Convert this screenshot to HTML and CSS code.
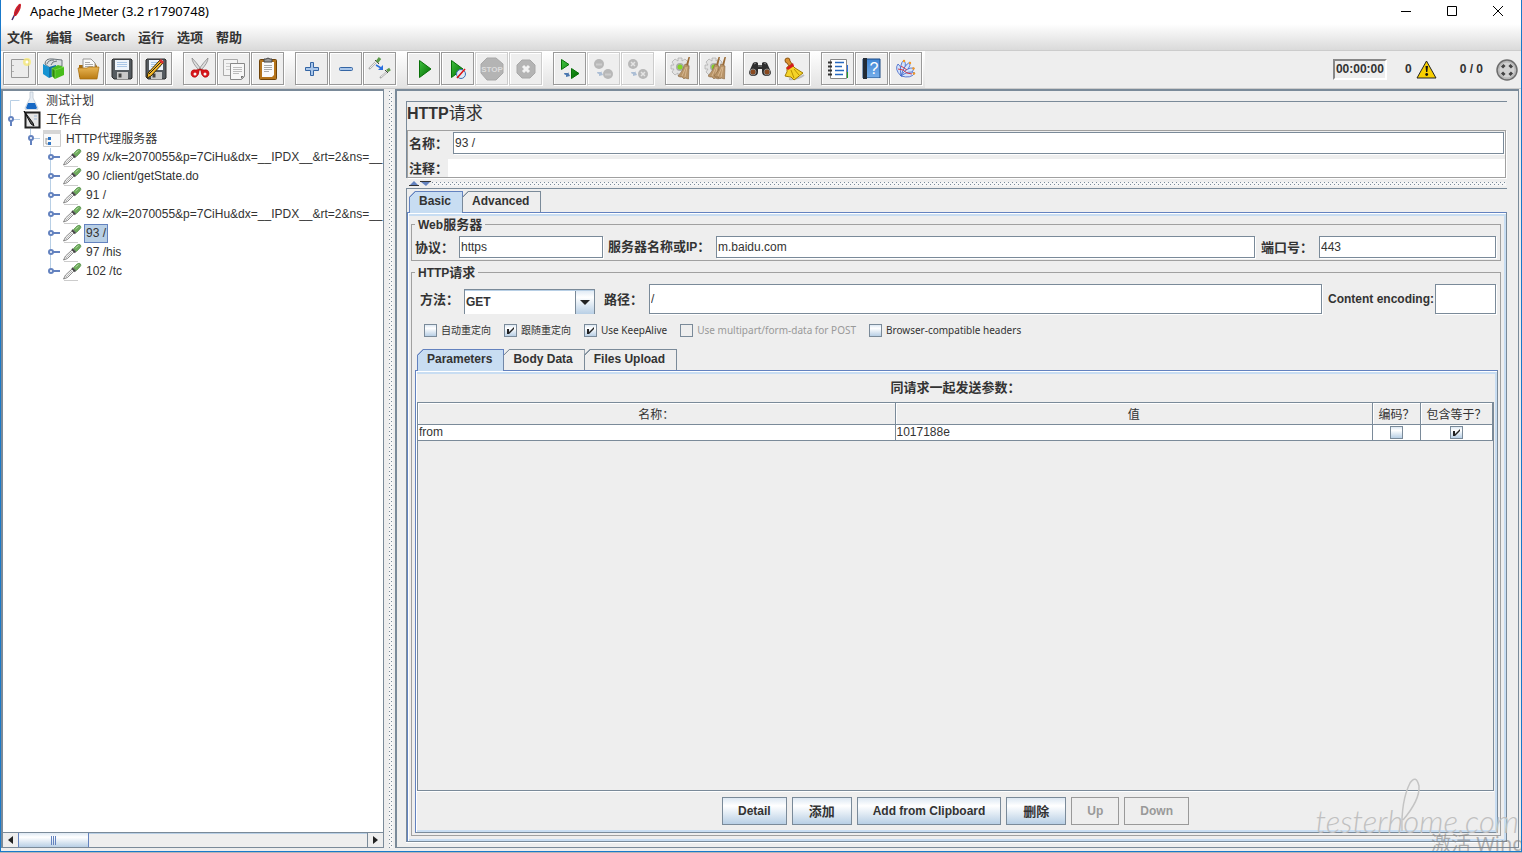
FILE: index.html
```
<!DOCTYPE html>
<html lang="zh-CN">
<head>
  <meta charset="UTF-8">
  <meta name="viewport" content="width=device-width, initial-scale=1.0">
  <title>Apache JMeter (3.2 r1790748)</title>
  <link rel="stylesheet" href="styles.css">
</head>
<body>
  <!-- shared gradients and symbols -->
  <svg class="defs" aria-hidden="true">
    <defs>
      <linearGradient id="green" x1="0" y1="0" x2="1" y2="1"><stop offset="0" stop-color="#3fc13f"/><stop offset="1" stop-color="#006a00"/></linearGradient>
      <linearGradient id="gold" x1="0" y1="0" x2="0" y2="1"><stop offset="0" stop-color="#e9b655"/><stop offset="1" stop-color="#b97a12"/></linearGradient>
      <linearGradient id="blue" x1="0" y1="0" x2="0" y2="1"><stop offset="0" stop-color="#3f86d6"/><stop offset="1" stop-color="#76aeea"/></linearGradient>
      <symbol id="leaf-handle" viewBox="0 0 19 19">
        <path d="M7.500 0v19" stroke="#b8cfe5"/>
        <path d="M10 9h7" stroke="#6382bf" stroke-width="2"/>
        <circle cx="8" cy="9" r="2" fill="#fff" stroke="#6382bf" stroke-width="2"/>
      </symbol>
      <symbol id="open-handle" viewBox="0 0 19 19">
        <path d="M7.500 0v9M9 9.500h8" stroke="#b8cfe5"/>
        <path d="M8 10v6" stroke="#6382bf" stroke-width="2"/>
        <circle cx="8" cy="9" r="2" fill="#fff" stroke="#6382bf" stroke-width="2"/>
      </symbol>
      <symbol id="dropper" viewBox="0 0 20 19">
        <path d="M2 18.500h14" stroke="#ccc"/>
        <path d="M1.500 17l2-4L10 7l2 2-6.500 6.500z" fill="#f2f2f2" stroke="#6c6c6c" stroke-width=".8"/>
        <path d="M4 15l6-6" stroke="#a8a8a8" stroke-width=".8"/>
        <path d="M10 6l3.500 3.500" stroke="#444" stroke-width="1.800"/>
        <path d="M11.500 5.500L15 2q2.500-1.500 3.500 0t-.8 3.200L14.500 8.500z" fill="#6fac5c" stroke="#4a8a40" stroke-width=".7"/>
        <path d="M13.500 5l3-2.500" stroke="#b4dca4"/>
      </symbol>
      <symbol id="floppy" viewBox="0 0 25 25">
        <path d="M4 3h18l1 1v18l-1 1H5l-2-2V4z" fill="#555b60" stroke="#2c2c2c"/>
        <path d="M6 4h14v10H6z" fill="#eef4fb"/>
        <path d="M8 6.500h10M8 8.500h10M8 10.500h10" stroke="#a9c6e6"/>
        <path d="M8 16h11v7H8z" fill="#c9c9c9"/>
        <path d="M9.500 17.500h3v4h-3z" fill="#444"/>
      </symbol>
      <symbol id="gear-base" viewBox="0 0 25 25">
        <path d="M9 2h4v3l3-2 3 3-2 3h3v4h-3l2 3-3 3-3-2v3H9v-3l-3 2-3-3 2-3H2V9h3L3 6l3-3 3 2z" fill="#e3e3e3" stroke="#b0b0b0" stroke-width=".8"/>
        <circle cx="11" cy="11" r="4" fill="#aaa"/><circle cx="11" cy="11" r="2.500" fill="#83d526"/>
      </symbol>
      <symbol id="broom" viewBox="0 0 13 23">
        <path d="M10.500 0h1.500l-2 9-2-1z" fill="#9b6b35"/>
        <path d="M7 7l4 2-.5 13-3.500-1-1 1-2-2H2l-2-1q5-5 7-12z" fill="#b89468" stroke="#8a6740" stroke-width=".6"/>
        <path d="M8 10l-4 9M9 10L7 20" stroke="#e0c09a" stroke-width=".8"/>
      </symbol>
      <symbol id="pair-arrow" viewBox="0 0 6 6"><path d="M0 1h4V0l2 4-4 1V3Q0 3 0 1z" fill="#4b78b0"/></symbol>
    </defs>
  </svg>

  <div class="window">
    <header class="titlebar">
      <svg class="app-icon" viewBox="0 0 16 20" width="16" height="20"><path d="M4 18l3-6" stroke="#4a2a6a" stroke-width="1.500"/><path d="M6 14Q5 8 11 2q2-1 2 1 0 5-5 11z" fill="#d22128"/><path d="M7 13l5-10" stroke="#8a1a4a" stroke-width=".8"/></svg>
      <span class="app-title">Apache JMeter (3.2 r1790748)</span>
      <div class="window-buttons">
        <button aria-label="Minimize"><svg width="12" height="12" viewBox="0 0 12 12"><path d="M1 6.500h10" stroke="#000"/></svg></button>
        <button aria-label="Maximize"><svg width="12" height="12" viewBox="0 0 12 12"><path d="M1.500 1.500h9v9h-9z" fill="none" stroke="#000"/></svg></button>
        <button aria-label="Close"><svg width="12" height="12" viewBox="0 0 12 12"><path d="M1 1l10 10M11 1L1 11" stroke="#000"/></svg></button>
      </div>
    </header>

    <nav class="menubar">
      <a href="#">文件</a>
      <a href="#">编辑</a>
      <a href="#" class="latin">Search</a>
      <a href="#">运行</a>
      <a href="#">选项</a>
      <a href="#">帮助</a>
    </nav>

    <div class="toolbar-row">
      <div class="toolbar">
        <div class="tool-group">
          <button aria-label="New"><svg viewBox="0 0 25 25"><path d="M4.500 3.500h17v18h-17z" fill="#ececec" stroke="#999"/><path d="M6 9v1M6 15v1" stroke="#777"/><circle cx="20" cy="6" r="4" fill="#f7ea7a" opacity=".8"/><circle cx="20" cy="6" r="1.500" fill="#fff"/></svg></button>
          <button aria-label="Templates"><svg viewBox="0 0 25 25"><path d="M4 8q0-6 8-5l9 1v6L9 12z" fill="#d9dde0" stroke="#6b747a"/><path d="M6 8q1-4 7-4M10 9q1-4 6-4" stroke="#6b747a" fill="none"/><path d="M2 8l6 3v11l-6-4z" fill="#1593d2"/><path d="M8 11l7-2v10l-7 3z" fill="#0f6fa8"/><path d="M11 12l6-3 6 2v8l-9 4-3-3z" fill="#48bd1c"/><path d="M11 12l3 2v9l-3-3zM14 14l9-3" fill="#2c8a0c" stroke="#8be35b" stroke-width=".6"/></svg></button>
          <button aria-label="Open"><svg viewBox="0 0 25 25"><path d="M4 9h4l1-2h11l2 3v11H4z" fill="#a86d10"/><path d="M8 3h8l4 4v9H8z" fill="#fafafa" stroke="#999"/><path d="M10 6.500h5M10 8.500h8M10 10.500h8" stroke="#aaa"/><path d="M3 12h9l2-1h10l-2 12H5z" fill="url(#gold)" stroke="#a36a0b" stroke-width=".7"/></svg></button>
          <button aria-label="Save"><svg viewBox="0 0 25 25"><use href="#floppy"/></svg></button>
          <button aria-label="Save as"><svg viewBox="0 0 25 25"><use href="#floppy"/><path d="M4 22l1-5L17 4l3 3L8 20z" fill="#f5b829" stroke="#3c2a00"/><path d="M6 18L18 6" stroke="#222"/><path d="M16 5l2-2 3 3-2 2z" fill="#d33"/></svg></button>
        </div>
        <div class="tool-group">
          <button aria-label="Cut"><svg viewBox="0 0 25 25"><path d="M5 2q0 5 7 12l2-1Q9 6 5 2zM21 2q0 5-7 12l-2-1q5-7 9-11z" fill="#ddd" stroke="#888" stroke-width=".8"/><path d="M9 14q-5-1-5 4 1 4 5 3 3-2 3-6l1-2 1 2q0 4 3 6 4 1 5-3 0-5-5-4l-4-1z" fill="#d8151b" stroke="#a00" stroke-width=".6"/><circle cx="8" cy="18" r="1.500" fill="#f6f6f6"/><circle cx="18" cy="18" r="1.500" fill="#f6f6f6"/></svg></button>
          <button aria-label="Copy"><svg viewBox="0 0 25 25"><path d="M2.500 3.500h14v16h-14z" fill="#f3f3f3" stroke="#aaa"/><path d="M5 7.500h9M5 10.500h4M5 13.500h4" stroke="#ccc"/><path d="M9.500 7.500h14v13l-3 3h-11z" fill="#f7f7f7" stroke="#888"/><path d="M12 11.500h9M12 13.500h9M12 15.500h9M12 17.500h6" stroke="#bbb"/><path d="M20 23v-3h3z" fill="#777"/></svg></button>
          <button aria-label="Paste"><svg viewBox="0 0 25 25"><rect x="4.500" y="3.500" width="17" height="20" rx="1" fill="#b5731a" stroke="#6f4308"/><path d="M7 6h12v13l-2 2H7z" fill="#fafafa"/><path d="M9 9.500h8M9 11.500h8M9 13.500h8M9 15.500h5" stroke="#aaa"/><path d="M9 3h2q2-2 4 0h2v3H9z" fill="#999" stroke="#444"/></svg></button>
        </div>
        <div class="tool-group">
          <button aria-label="Expand all"><svg viewBox="0 0 25 25"><path d="M11.500 6.500h3v5h5v3h-5v5h-3v-5h-5v-3h5z" fill="#a9c6ea" stroke="#3465a4"/></svg></button>
          <button aria-label="Collapse all"><svg viewBox="0 0 25 25"><rect x="6.500" y="11.500" width="13" height="3" rx="1" fill="#a9c6ea" stroke="#3465a4"/></svg></button>
          <button aria-label="Toggle"><svg viewBox="0 0 25 25"><path d="M2 13l7-7M13 22l7-6" stroke="#aaa" stroke-width="2"/><path d="M3 12l6-6M14 21l6-5" stroke="#eee"/><path d="M8 4l4 4M18 14l3 3" stroke="#444"/><path d="M10 6l3-4M20 15l3-2" stroke="#5d9a4a" stroke-width="3"/><path d="M9 9l5 3" stroke="#2a6fe0" stroke-width="1.500"/><path d="M16 9v5h-5z" fill="#2a6fe0"/></svg></button>
        </div>
        <div class="tool-group">
          <button aria-label="Start"><svg viewBox="0 0 25 25"><path d="M8.500 4.500L20 13 8.500 21.500z" fill="url(#green)" stroke="#087008"/></svg></button>
          <button aria-label="Start no pauses"><svg viewBox="0 0 25 25"><path d="M6.500 4.500L18 13 6.500 21.500z" fill="url(#green)" stroke="#087008"/><circle cx="16" cy="18" r="4.500" fill="#dfeaf5" stroke="#3a6fb5"/><path d="M12 22l8-9" stroke="#d11" stroke-width="1.500"/></svg></button>
          <button aria-label="Stop" disabled><svg viewBox="0 0 25 25"><path d="M8 2h9l7 6v9l-7 7H8l-6-7V8z" fill="#b4b4b4" stroke="#a8a8a8"/><text x="13" y="16" class="stop-text">STOP</text></svg></button>
          <button aria-label="Shutdown" disabled><svg viewBox="0 0 25 25"><path d="M9 4h8l5 5v8l-5 5H9l-5-5V9z" fill="#b4b4b4" stroke="#a8a8a8"/><path d="M10 10l6 6M16 10l-6 6" stroke="#f2f2f2" stroke-width="3"/></svg></button>
        </div>
        <div class="tool-group">
          <button aria-label="Remote start all"><svg viewBox="0 0 25 25"><path d="M4.500 3.500L12 8.500l-7.500 5zM14.500 12.500l7.500 5-7.500 5z" fill="url(#green)" stroke="#087008"/><use href="#pair-arrow" x="7" y="16" width="6" height="6"/></svg></button>
          <button aria-label="Remote stop all" disabled><svg viewBox="0 0 25 25"><g fill="#b8b8b8"><circle cx="8" cy="8" r="5"/><circle cx="17" cy="18" r="5"/></g><path d="M5 8.500h6M14 18.500h6" stroke="#ccc" stroke-width="2"/><use href="#pair-arrow" x="6" y="15" width="6" height="6" opacity=".4"/></svg></button>
          <button aria-label="Remote shutdown all" disabled><svg viewBox="0 0 25 25"><g fill="#b8b8b8"><circle cx="8" cy="8" r="5"/><circle cx="18" cy="18" r="5"/></g><path d="M6 6l4 4M10 6l-4 4M16 16l4 4M20 16l-4 4" stroke="#e4e4e4" stroke-width="1.500"/><use href="#pair-arrow" x="6" y="15" width="6" height="6" opacity=".4"/></svg></button>
        </div>
        <div class="tool-group">
          <button aria-label="Clear"><svg viewBox="0 0 25 25"><use href="#gear-base"/><use href="#broom" x="9" y="1" width="13" height="23"/></svg></button>
          <button aria-label="Clear all"><svg viewBox="0 0 25 25"><use href="#gear-base"/><use href="#broom" x="5" y="1" width="13" height="23"/><use href="#broom" x="11" y="1" width="13" height="23"/></svg></button>
        </div>
        <div class="tool-group">
          <button aria-label="Search"><svg viewBox="0 0 25 25"><path d="M6 7q3-2 5 0v2h4V7q2-2 5 0l4 9q0 4-4 4-5 0-5-4v-3h-4v3q0 4-5 4-4 0-4-4z" fill="#2e2e2e"/><circle cx="6" cy="16" r="3" fill="#8a4a20" stroke="#888"/><circle cx="20" cy="16" r="3" fill="#8a4a20" stroke="#888"/><path d="M7 8l2-1M17 7l2 1M11 10h4" stroke="#888"/></svg></button>
          <button aria-label="Reset search"><svg viewBox="0 0 25 25"><path d="M8 23q8 1 15-4" stroke="#bbb" stroke-width="2" fill="none"/><path d="M4 4q0-2 3-2 2 0 2 3l2 3-3 2-2-3Q4 7 4 4z" fill="#d9902f" stroke="#8c5410"/><path d="M11 9l3 3 8 5-9 7-3-3H9l-5-1q3-4 2-9z" fill="#f5d327" stroke="#a07b00"/><path d="M5 12l7-5 1 3-6 4z" fill="#d61a1a"/><path d="M10 14l3 8M13 13l5 6" stroke="#b99100"/></svg></button>
        </div>
        <div class="tool-group">
          <button aria-label="Function helper"><svg viewBox="0 0 25 25"><path d="M20 12h3v10h-3z" fill="#19a02a"/><path d="M21 9h2v7h-2z" fill="#2a6fe0"/><path d="M5.500 3.500h16v19h-16z" fill="#fff" stroke="#888"/><path d="M3 6.500h4M3 10.500h4M3 14.500h4M3 18.500h4" stroke="#333" stroke-width="2"/><path d="M10 6.500h9M10 10.500h7M10 14.500h9M10 18.500h8" stroke="#2769c0" stroke-width="1.500"/></svg></button>
          <button aria-label="Help"><svg viewBox="0 0 25 25"><path d="M4 3h17v19H4z" fill="url(#blue)" stroke="#1c4a84"/><path d="M4 2h4v21H4z" fill="#222b36"/><path d="M8 22.500h13" stroke="#dfe8f2"/><text x="15" y="18" class="help-text">?</text></svg></button>
          <button aria-label="About"><svg viewBox="0 0 25 25"><g fill="#d5e3fa" stroke="#3860c8" stroke-width=".8"><path d="M8 20Q1 13 5 8q5 4 3 12z"/><path d="M8 20Q6 8 11 4q4 6-3 16z"/><path d="M8 20Q11 9 17 6q1 7-9 14z"/><path d="M8 20q5-9 13-8-1 7-13 8z"/><path d="M8 20q8-6 14-3-4 6-14 3z"/></g><path d="M5 13l5 1 4 3 5 1M8 10l6 4" stroke="#d03a4a" fill="none"/><g fill="#f69923"><circle cx="11" cy="5" r="1.200"/><circle cx="17" cy="7" r="1.200"/><circle cx="20.500" cy="12.500" r="1.200"/><circle cx="21" cy="17.500" r="1.200"/></g></svg></button>
        </div>
      </div>

      <div class="status">
        <span class="timer">00:00:00</span>
        <span class="errors">0</span>
        <svg class="warning" viewBox="0 0 21 19" width="21" height="19"><path d="M10.500 1L20 18H1z" fill="#f8cf00" stroke="#222" stroke-linejoin="round"/><path d="M9.500 6h2.500l-.7 6h-1.200z" fill="#111"/><circle cx="10.700" cy="14.500" r="1.400" fill="#111"/></svg>
        <span class="threads">0 / 0</span>
        <svg class="run-state" viewBox="0 0 22 22" width="22" height="22"><circle cx="11" cy="11" r="10" fill="#b9b9b9" stroke="#6d6d6d" stroke-width="1.500"/><circle cx="11" cy="11" r="7.500" fill="#d2d2d2"/><path d="M6 8.500L8.500 6M13.500 6L16 8.500M16 13.500L13.500 16M8.500 16L6 13.500" fill="none" stroke="#444" stroke-width="3"/></svg>
      </div>
    </div>

    <main class="main">
      <aside class="tree-panel">
        <ul class="tree">
          <li><svg class="handle" viewBox="0 0 19 19"><path d="M7.500 19V9.500h9" fill="none" stroke="#b8cfe5"/></svg><svg class="node-icon" viewBox="0 0 20 19"><path d="M8 1h3v6l5 10q0 2-2 2H5q-2 0-2-2l5-10z" fill="#e6edf4" stroke="#b5c0cc" stroke-width=".7"/><path d="M6 12h7l2 5-1 1H5l-1-1z" fill="#1668c4"/></svg><span>测试计划</span></li>
          <li><svg class="handle"><use href="#open-handle"/></svg><svg class="node-icon" viewBox="0 0 20 19"><path d="M3.500 2.500h14v15h-14z" fill="#e6e6e6" stroke="#222" stroke-width="2"/><path d="M2 1l9 12 1 3-3-2z" fill="#555" stroke="#111"/><path d="M12 6h3M12 9h3" stroke="#9bb7d8"/></svg><span>工作台</span></li>
          <li class="depth-1"><svg class="handle"><use href="#open-handle"/></svg><svg class="node-icon" viewBox="0 0 20 19"><path d="M1.500 2.500h17v15h-17z" fill="#fafafa" stroke="#ccc"/><path d="M1 1h18v4H1z" fill="#d5d5d5"/><path d="M4 9v6h3M4 10h3" stroke="#999" fill="none"/><path d="M6 8h3v3H6zM6 13h3v3H6z" fill="#2d74c4"/></svg><span>HTTP代理服务器</span></li>
          <li class="depth-2"><svg class="handle"><use href="#leaf-handle"/></svg><svg class="node-icon"><use href="#dropper"/></svg><span>89 /x/k=2070055&amp;p=7CiHu&amp;dx=__IPDX__&amp;rt=2&amp;ns=__</span></li>
          <li class="depth-2"><svg class="handle"><use href="#leaf-handle"/></svg><svg class="node-icon"><use href="#dropper"/></svg><span>90 /client/getState.do</span></li>
          <li class="depth-2"><svg class="handle"><use href="#leaf-handle"/></svg><svg class="node-icon"><use href="#dropper"/></svg><span>91 /</span></li>
          <li class="depth-2"><svg class="handle"><use href="#leaf-handle"/></svg><svg class="node-icon"><use href="#dropper"/></svg><span>92 /x/k=2070055&amp;p=7CiHu&amp;dx=__IPDX__&amp;rt=2&amp;ns=__</span></li>
          <li class="depth-2"><svg class="handle"><use href="#leaf-handle"/></svg><svg class="node-icon"><use href="#dropper"/></svg><span class="selected">93 /</span></li>
          <li class="depth-2"><svg class="handle"><use href="#leaf-handle"/></svg><svg class="node-icon"><use href="#dropper"/></svg><span>97 /his</span></li>
          <li class="depth-2"><svg class="handle" viewBox="0 0 19 19"><path d="M7.500 0v9" stroke="#b8cfe5"/><path d="M10 9h7" stroke="#6382bf" stroke-width="2"/><circle cx="8" cy="9" r="2" fill="#fff" stroke="#6382bf" stroke-width="2"/></svg><svg class="node-icon"><use href="#dropper"/></svg><span>102 /tc</span></li>
        </ul>
        <div class="scrollbar">
          <button aria-label="Scroll left"><svg width="5" height="8" viewBox="0 0 5 8"><path d="M5 0v8L0 4z" fill="#222"/></svg></button>
          <div class="track"><div class="thumb"></div></div>
          <button aria-label="Scroll right"><svg width="5" height="8" viewBox="0 0 5 8"><path d="M0 0v8l5-4z" fill="#222"/></svg></button>
        </div>
      </aside>

      <div class="splitter"></div>

      <section class="editor">
        <div class="editor-head">
          <h1>HTTP<span>请求</span></h1>
          <div class="name-panel">
            <div class="name-row">
              <label for="name">名称：</label>
              <input id="name" type="text" value="93 /">
            </div>
            <div class="comment-row">
              <label for="comment">注释：</label>
              <input id="comment" type="text">
            </div>
          </div>
        </div>

        <div class="h-splitter">
          <svg width="24" height="5" viewBox="0 0 24 5"><path d="M1 5l5-5 5 5z" fill="#6382bf"/><path d="M1 4.500h10M12 .5h11" stroke="#333"/><path d="M13 1h9l-4 4z" fill="#6382bf"/></svg>
          <div class="grip"></div>
        </div>

        <div class="editor-body">
          <div class="tabs">
            <button class="tab active">Basic</button>
            <button class="tab">Advanced</button>
          </div>
          <div class="tab-pane outer-pane">
            <fieldset class="web-server">
              <legend>Web<span class="cjk">服务器</span></legend>
              <div class="server-row">
                <label class="short" for="protocol">协议：</label>
                <input id="protocol" type="text" value="https">
                <label class="host-label" for="host">服务器名称或<span class="latin">IP</span>：</label>
                <input id="host" type="text" value="m.baidu.com">
                <label class="port-label" for="port">端口号：</label>
                <input id="port" type="text" value="443">
              </div>
            </fieldset>

            <fieldset class="http-request">
              <legend>HTTP<span class="cjk">请求</span></legend>
              <div class="path-row">
                <label class="short" for="method">方法：</label>
                <div class="select-box">
                  <select id="method">
                    <option>GET</option>
                    <option>POST</option>
                  </select>
                  <svg width="10" height="5" viewBox="0 0 10 5"><path d="M0 0h10L5 5z" fill="#222"/></svg>
                </div>
                <label class="path-label" for="path">路径：</label>
                <input id="path" type="text" value="/">
                <label class="encoding-label latin" for="encoding">Content encoding:</label>
                <input id="encoding" type="text">
              </div>
              <div class="checks">
                <label><input type="checkbox">自动重定向</label>
                <label><input type="checkbox" checked>跟随重定向</label>
                <label><input type="checkbox" checked>Use KeepAlive</label>
                <label class="off"><input type="checkbox" disabled>Use multipart/form-data for POST</label>
                <label><input type="checkbox">Browser-compatible headers</label>
              </div>

              <div class="tabs">
                <button class="tab active">Parameters</button>
                <button class="tab">Body Data</button>
                <button class="tab">Files Upload</button>
              </div>
              <div class="tab-pane params-pane">
                <h2>同请求一起发送参数：</h2>
                <div class="table-box">
                  <table>
                    <colgroup><col><col><col class="col-encode"><col class="col-equals"></colgroup>
                    <thead>
                      <tr><th>名称：</th><th>值</th><th>编码？</th><th>包含等于？</th></tr>
                    </thead>
                    <tbody>
                      <tr>
                        <td>from</td>
                        <td>1017188e</td>
                        <td class="center"><input type="checkbox" aria-label="编码"></td>
                        <td class="center"><input type="checkbox" aria-label="包含等于" checked></td>
                      </tr>
                    </tbody>
                  </table>
                </div>
                <div class="actions">
                  <button class="latin">Detail</button>
                  <button>添加</button>
                  <button class="latin">Add from Clipboard</button>
                  <button>删除</button>
                  <button class="latin" disabled>Up</button>
                  <button class="latin" disabled>Down</button>
                </div>
              </div>
            </fieldset>
          </div>
        </div>
      </section>
    </main>

    <div class="watermark">
      <svg viewBox="0 0 30 56" width="30" height="56"><path d="M4 54Q3 24 12 6q6-9 9 3 1 14-16 34" fill="none" stroke="#c4c4c4" stroke-width="1.500"/></svg>
      <span>testerhome.com</span>
    </div>
    <div class="activation">激活 Windows</div>
  </div>
</body>
</html>
```
FILE: styles.css
```
* {
  margin: 0;
  padding: 0;
  box-sizing: border-box;
}

:root {
  --line: #7a8a99;
  --blue: #6382bf;
  --light: #c8ddf2;
  --gray: #a0a0a0;
  --bg: #eeeeee;
  --metal: linear-gradient(#dde8f3, #ffffff 30%, #b8cfe5);
}

body {
  height: 100vh;
  padding-bottom: 1px;
  background: #b5b5b5;
  color: #333;
  font-family: "Liberation Sans", "Noto Sans CJK SC", sans-serif;
  font-size: 12px;
  line-height: 15px;
  overflow: hidden;
}

button,
input,
select {
  font: inherit;
  color: inherit;
}

.defs {
  position: absolute;
  width: 0;
  height: 0;
}

.window {
  position: relative;
  display: flex;
  flex-direction: column;
  height: 100%;
  overflow: hidden;
  background: var(--bg);
  border: 1px solid #1979ca;
  border-top: 0;
}

/* Title bar */
.titlebar {
  display: flex;
  align-items: center;
  height: 24px;
  padding-left: 7px;
  background: #fff;
}
.app-title {
  margin: 0 auto 2px 6px;
  font-family: "Noto Sans", sans-serif;
  font-size: 13px;
  color: #000;
}
.window-buttons {
  display: flex;
  margin-bottom: 3px;
}
.window-buttons button {
  display: flex;
  align-items: center;
  justify-content: center;
  width: 46px;
  height: 20px;
  border: 0;
  background: none;
}

/* Menu */
.menubar {
  display: flex;
  align-items: center;
  gap: 13px;
  height: 27px;
  padding-left: 6px;
  background: linear-gradient(#fff, #dadada);
  border-bottom: 1px solid #ccc;
  font-size: 13px;
  font-weight: bold;
}
.menubar a {
  color: #333;
  text-decoration: none;
}
.latin,
.menubar .latin {
  font-size: 12px;
}

/* Toolbar */
.toolbar-row {
  display: flex;
  justify-content: space-between;
  height: 38px;
  border-bottom: 1px solid #ccc;
}
.toolbar {
  display: flex;
  gap: 11px;
  padding: 1px 3px 3px 2px;
  background: linear-gradient(#fff, #e2e2e2);
}
.tool-group {
  display: flex;
  gap: 1px;
}
.tool-group button {
  display: flex;
  align-items: center;
  justify-content: center;
  width: 33px;
  height: 33px;
  border: 1px solid #999;
  background: var(--bg);
  box-shadow: inset 1px 1px #fff, 1px 1px #fff;
}
.tool-group button:disabled {
  border-color: #ccc;
}
.tool-group svg {
  width: 25px;
  height: 25px;
}
.stop-text {
  font-size: 8px;
  font-weight: bold;
  text-anchor: middle;
  fill: #ddd;
}
.help-text {
  font-size: 16px;
  text-anchor: middle;
  fill: #fff;
}

.status {
  display: flex;
  align-items: center;
  padding-right: 3px;
  font-weight: bold;
}
.timer {
  padding: 1px;
  border: 2px solid #888;
  border-right-color: #fff;
  border-bottom-color: #fff;
  margin-right: 18px;
}
.warning {
  margin: 0 23px 0 4px;
}
.run-state {
  margin-left: 13px;
}

/* Main split */
.main {
  display: flex;
  flex: 1;
  min-height: 0;
  padding-bottom: 3px;
}
.tree-panel {
  display: flex;
  flex-direction: column;
  width: 383px;
  border: 1px solid var(--line);
  border-width: 2px 1px 1px 2px;
  background: #fff;
}
.tree {
  flex: 1;
  overflow: hidden;
  list-style: none;
}
.tree li {
  display: flex;
  align-items: center;
  height: 19px;
  white-space: nowrap;
}
.tree .depth-1 {
  padding-left: 20px;
}
.tree .depth-2 {
  padding-left: 40px;
}
.handle {
  flex: none;
  width: 19px;
  height: 19px;
}
.node-icon {
  flex: none;
  width: 20px;
  height: 19px;
}
.tree span {
  margin-left: 2px;
  padding: 2px 1px 0;
  border: 1px solid transparent;
}
.tree .depth-2 span {
  padding: 1px;
}
.tree .selected {
  background: #b8cfe5;
  border-color: var(--blue);
}

.scrollbar {
  display: flex;
  height: 15px;
  border-top: 1px solid var(--line);
  background: var(--bg);
}
.scrollbar button {
  display: flex;
  align-items: center;
  justify-content: center;
  width: 15px;
  border: 0;
  background: var(--bg);
}
.track {
  flex: 1;
  border-right: 1px solid var(--line);
  box-shadow: inset 0 1px #b8cfe5;
}
.thumb {
  width: 71px;
  height: 100%;
  border: 1px solid var(--blue);
  border-width: 0 1px;
  background:
    repeating-linear-gradient(90deg, var(--blue) 0 1px, transparent 1px 2px) center / 5px 9px no-repeat,
    var(--metal);
}

/* Dotted split bars */
.splitter,
.grip {
  background-color: #f6f6f6;
  background-image:
    conic-gradient(at 1px 1px, transparent 75%, var(--line) 0),
    conic-gradient(at 1px 1px, transparent 75%, var(--line) 0);
  background-position: 0 0, 2px 2px;
  background-size: 4px 4px;
}
.splitter {
  width: 11px;
  border: solid var(--bg);
  border-width: 2px 2px 0 5px;
}

/* Editor */
.editor {
  display: flex;
  flex: 1;
  flex-direction: column;
  min-width: 0;
  margin-right: 2px;
  padding: 10px 11px 5px 9px;
  border: 1px solid var(--line);
  border-width: 2px 1px 1px 2px;
}
.editor-head {
  border: solid var(--line);
  border-width: 1px 0 0 1px;
}
h1 {
  height: 28px;
  font-size: 16px;
  line-height: 24px;
}
h1 span {
  font-size: 17px;
  font-weight: normal;
}
label {
  flex: none;
  font-size: 13px;
  font-weight: bold;
}
label.latin {
  font-size: 12px;
}
input[type="text"] {
  min-width: 0;
  height: 22px;
  padding: 0 1px;
  border: 1px solid var(--line);
  background: #fff;
  box-shadow: 1px 1px #fff;
}
.name-panel {
  margin-right: 1px;
  padding-top: 1px;
  border: 1px solid var(--gray);
  box-shadow: 1px 1px #fff;
}
.name-row,
.comment-row {
  display: flex;
  align-items: center;
  padding-left: 1px;
}
.name-row {
  margin-bottom: 5px;
  padding-right: 1px;
}
.name-row label {
  width: 44px;
}
.comment-row label {
  width: 39px;
}
.name-row input,
.comment-row input {
  flex: 1;
}
.comment-row input[type="text"] {
  height: 18px;
  border: 0;
  box-shadow: none;
}
.h-splitter {
  display: flex;
  height: 10px;
  padding: 3px 1px 2px 2px;
}
.grip {
  flex: 1;
  height: 4px;
  margin-top: 1px;
}

.editor-body {
  display: flex;
  flex: 1;
  flex-direction: column;
  min-height: 0;
  padding-top: 2px;
  border: solid var(--line);
  border-width: 1px 0 0 1px;
  box-shadow: 0 1px #fff;
}

/* Tabs: cut top-left corner with a diagonal edge */
.tabs {
  display: flex;
  padding-left: 2px;
}
.tab {
  height: 21px;
  padding: 0 11px 2px 9px;
  margin-left: -1px;
  border: 1px solid var(--line);
  border-bottom: 0;
  background: linear-gradient(135deg, var(--line) 5px, var(--bg) 5px) border-box;
  clip-path: polygon(6px 0, 100% 0, 100% 100%, 0 100%, 0 6px);
  font-weight: bold;
}
.tab.active {
  height: 22px;
  margin: 0 0 -1px;
  padding-bottom: 3px;
  border-color: var(--blue);
  background: linear-gradient(135deg, var(--blue) 5px, var(--light) 5px) border-box;
}
.tab-pane {
  display: flex;
  flex: 1;
  flex-direction: column;
  min-height: 0;
  border: 1px solid var(--line);
  border-top-color: var(--blue);
  border-left-color: var(--blue);
  box-shadow: inset 1px 1px #fff, inset 0 3px var(--light), inset -2px -2px var(--light);
}
.outer-pane {
  padding: 4px 5px 5px 3px;
}

fieldset {
  min-width: 0;
  border: 1px solid var(--gray);
}
legend {
  height: 15px;
  padding: 0 3px;
  font-weight: bold;
}
.cjk {
  font-size: 13px;
}
.web-server {
  padding: 4px 4px 2px 3px;
}
.server-row,
.path-row {
  display: flex;
  align-items: center;
}
.short {
  width: 44px;
}
#protocol {
  width: 144px;
}
.host-label {
  width: 113px;
  padding-left: 5px;
}
#host,
#path {
  flex: 1;
}
.port-label {
  width: 64px;
  padding-left: 6px;
}
#port {
  width: 177px;
}

.http-request {
  display: flex;
  flex: 1;
  flex-direction: column;
  min-height: 0;
  margin-top: 4px;
  padding: 4px 2px 2px 3px;
}
.path-row {
  padding: 0 2px 0 5px;
}
.path-row input[type="text"] {
  height: 30px;
}
.select-box {
  position: relative;
  align-self: flex-end;
  height: 25px;
}
.select-box select {
  appearance: none;
  width: 131px;
  height: 25px;
  padding: 0 1px;
  border: 1px solid var(--line);
  border-bottom: 0;
  border-radius: 0;
  background:
    linear-gradient(var(--line), var(--line)) right 18px top / 1px 100% no-repeat,
    var(--metal) right / 18px 100% no-repeat,
    #fff;
  font-weight: bold;
  box-shadow: inset 0 1px #b8cfe5;
}
.select-box svg {
  position: absolute;
  right: 5px;
  top: 11px;
  pointer-events: none;
}
.path-label {
  width: 54px;
  padding-left: 9px;
}
.encoding-label {
  width: 113px;
  padding-left: 6px;
}
#encoding {
  width: 61px;
}

.checks {
  display: flex;
  gap: 13px;
  height: 19px;
  margin: 7px 0 9px;
  padding-left: 9px;
}
.checks label {
  display: flex;
  align-items: center;
  gap: 4px;
  font-family: "Noto Sans", "Noto Sans CJK SC", sans-serif;
  font-size: 10px;
  font-weight: normal;
}
.checks .off {
  color: #999;
}
input[type="checkbox"] {
  appearance: none;
  width: 13px;
  height: 13px;
  border: 1px solid var(--line);
  background: var(--metal);
}
input[type="checkbox"]:disabled {
  background: none;
}
input[type="checkbox"]:checked::before {
  content: "";
  display: block;
  width: 11px;
  height: 11px;
  background: #222;
  clip-path: polygon(2px 4px, 4px 4px, 4px 7px, 9px 2px, 9px 4px, 4px 9px, 2px 9px);
}

.params-pane {
  padding: 0 3px 7px 1px;
}
h2 {
  height: 31px;
  font-size: 13px;
  line-height: 33px;
  text-align: center;
}
.table-box {
  flex: 1;
  min-height: 0;
  border: 1px solid var(--line);
  box-shadow: 0 1px #fff;
}
table {
  width: 100%;
  table-layout: fixed;
  border-collapse: separate;
  border-spacing: 0;
}
.col-encode {
  width: 48px;
}
.col-equals {
  width: 72px;
}
th,
td {
  border-right: 1px solid var(--line);
  border-bottom: 1px solid var(--line);
}
th {
  height: 22px;
  padding-top: 3px;
  font-weight: normal;
  box-shadow: inset 1px 1px #fff;
  white-space: nowrap;
}
td {
  height: 16px;
  padding-left: 1px;
  background: #fff;
}
td.center {
  padding: 0;
  text-align: center;
}
td input[type="checkbox"] {
  display: block;
  margin: 0 auto;
}

.actions {
  display: flex;
  justify-content: center;
  gap: 5px;
  margin-top: 6px;
}
.actions button {
  height: 28px;
  padding: 0 16px;
  border: 1px solid var(--line);
  background: var(--metal);
  font-size: 13px;
  font-weight: bold;
}
.actions .latin {
  padding: 0 15px;
  font-size: 12px;
}
.actions button:disabled {
  border-color: #999;
  background: none;
  color: #999;
}

/* Overlays in the lower right corner */
.watermark {
  position: absolute;
  right: 2px;
  bottom: 16px;
  color: #c0c0c0;
  font-family: Lato, sans-serif;
  font-size: 31px;
  font-style: italic;
  font-weight: 300;
  line-height: 28px;
  pointer-events: none;
}
.watermark svg {
  position: absolute;
  left: 82px;
  bottom: 2px;
}
.activation {
  position: absolute;
  left: calc(100% - 90px);
  bottom: -6px;
  color: rgba(130, 130, 130, .6);
  font-family: "Noto Sans", "Noto Sans CJK SC", sans-serif;
  font-size: 20px;
  line-height: 26px;
  white-space: nowrap;
  pointer-events: none;
}
```
